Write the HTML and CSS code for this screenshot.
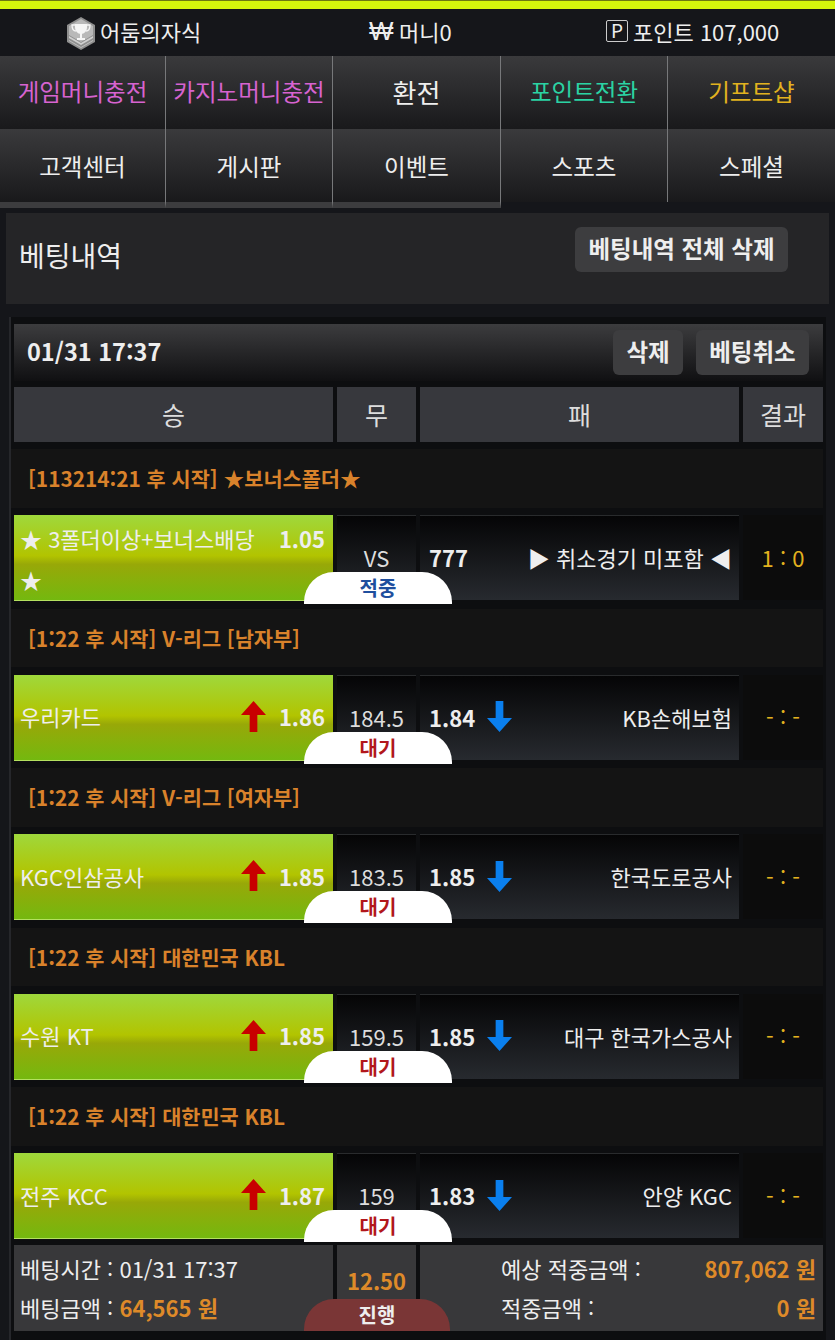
FILE: index.html
```html
<!DOCTYPE html>
<html lang="ko">
<head>
	<meta charset="UTF-8">
	<title>베팅내역</title>
	<link rel="stylesheet" href="styles.css">
</head>
<body>
	<div class="topLine"></div>
	<div class="userBar">
		<div class="userItem">
			<svg class="rankIcon" width="30" height="34" viewBox="0 0 30 34">
				<polygon points="15,0 29,8 29,25 15,33 1,25 1,8" fill="#8f8f8f"/>
				<polygon points="15,2 27,9 27,18 15,25 3,18 3,9" fill="#b9b9b9"/>
				<polygon points="3,19 15,26 27,19 27,21 15,28 3,21" fill="#d0d0d0"/>
				<polygon points="3,23 15,30 27,23 27,24 15,31 3,24" fill="#c0c0c0"/>
				<path d="M9 7h12v3c0 4-2.500 7-6 7s-6-3-6-7z" fill="#f5f5f5"/>
				<path d="M9 8H6c0 4 2 6 4 6M21 8h3c0 4-2 6-4 6" fill="none" stroke="#f5f5f5" stroke-width="1.300"/>
				<path d="M14 16h2v5h3v2h-8v-2h3z" fill="#f5f5f5"/>
			</svg>
			<span>어둠의자식</span>
		</div>
		<div class="userItem">
			<span class="wonSign">₩</span>
			<span>머니0</span>
		</div>
		<div class="userItem">
			<span class="pointBox">P</span>
			<span>포인트 107,000</span>
		</div>
	</div>

	<ul class="nav">
		<li class="pink">게임머니충전</li>
		<li class="pink">카지노머니충전</li>
		<li class="bigText">환전</li>
		<li class="mint">포인트전환</li>
		<li class="gold">기프트샵</li>
	</ul>
	<ul class="nav navSecond">
		<li class="striped">고객센터</li>
		<li class="striped">게시판</li>
		<li class="striped">이벤트</li>
		<li>스포츠</li>
		<li>스페셜</li>
	</ul>

	<div class="pageTitle">
		<h1>베팅내역</h1>
		<button class="btn btnAll">베팅내역 전체 삭제</button>
	</div>

	<div class="betBox">
		<div class="betHead">
			<span class="betDate">01/31 17:37</span>
			<div class="betBtns">
				<button class="btn btnDelete">삭제</button>
				<button class="btn btnCancel">베팅취소</button>
			</div>
		</div>

		<div class="cols colTitles">
			<div>승</div>
			<div>무</div>
			<div>패</div>
			<div>결과</div>
		</div>

		<div class="league">[113214:21 후 시작] ★보너스폴더★</div>
		<div class="cols match">
			<div class="home homeWrap">
				<span class="teamName wrapName">★ 3폴더이상+보너스배당 ★</span>
				<b class="odds oddsTop">1.05</b>
			</div>
			<div class="draw">VS<span class="pill hit">적중</span></div>
			<div class="away">
				<b class="odds">777</b>
				<span class="teamName">▶ 취소경기 미포함 ◀</span>
			</div>
			<div class="score">1 : 0</div>
		</div>

		<div class="league">[1:22 후 시작] V-리그 [남자부]</div>
		<div class="cols match">
			<div class="home">
				<span class="teamName">우리카드</span>
				<svg class="arrow" width="25" height="31" viewBox="0 0 26 31" preserveAspectRatio="none"><polygon points="13,0 26,14 17,14 17,31 9,31 9,14 0,14" fill="#c80000"/></svg>
				<b class="odds">1.86</b>
			</div>
			<div class="draw">184.5<span class="pill">대기</span></div>
			<div class="away">
				<b class="odds">1.84</b>
				<svg class="arrow" width="25" height="31" viewBox="0 0 26 31" preserveAspectRatio="none"><polygon points="13,31 26,17 17,17 17,0 9,0 9,17 0,17" fill="#0a7fee"/></svg>
				<span class="teamName">KB손해보험</span>
			</div>
			<div class="score">- : -</div>
		</div>

		<div class="league">[1:22 후 시작] V-리그 [여자부]</div>
		<div class="cols match">
			<div class="home">
				<span class="teamName">KGC인삼공사</span>
				<svg class="arrow" width="25" height="31" viewBox="0 0 26 31" preserveAspectRatio="none"><polygon points="13,0 26,14 17,14 17,31 9,31 9,14 0,14" fill="#c80000"/></svg>
				<b class="odds">1.85</b>
			</div>
			<div class="draw">183.5<span class="pill">대기</span></div>
			<div class="away">
				<b class="odds">1.85</b>
				<svg class="arrow" width="25" height="31" viewBox="0 0 26 31" preserveAspectRatio="none"><polygon points="13,31 26,17 17,17 17,0 9,0 9,17 0,17" fill="#0a7fee"/></svg>
				<span class="teamName">한국도로공사</span>
			</div>
			<div class="score">- : -</div>
		</div>

		<div class="league">[1:22 후 시작] 대한민국 KBL</div>
		<div class="cols match">
			<div class="home">
				<span class="teamName">수원 KT</span>
				<svg class="arrow" width="25" height="31" viewBox="0 0 26 31" preserveAspectRatio="none"><polygon points="13,0 26,14 17,14 17,31 9,31 9,14 0,14" fill="#c80000"/></svg>
				<b class="odds">1.85</b>
			</div>
			<div class="draw">159.5<span class="pill">대기</span></div>
			<div class="away">
				<b class="odds">1.85</b>
				<svg class="arrow" width="25" height="31" viewBox="0 0 26 31" preserveAspectRatio="none"><polygon points="13,31 26,17 17,17 17,0 9,0 9,17 0,17" fill="#0a7fee"/></svg>
				<span class="teamName">대구 한국가스공사</span>
			</div>
			<div class="score">- : -</div>
		</div>

		<div class="league">[1:22 후 시작] 대한민국 KBL</div>
		<div class="cols match">
			<div class="home">
				<span class="teamName">전주 KCC</span>
				<svg class="arrow" width="25" height="31" viewBox="0 0 26 31" preserveAspectRatio="none"><polygon points="13,0 26,14 17,14 17,31 9,31 9,14 0,14" fill="#c80000"/></svg>
				<b class="odds">1.87</b>
			</div>
			<div class="draw">159<span class="pill">대기</span></div>
			<div class="away">
				<b class="odds">1.83</b>
				<svg class="arrow" width="25" height="31" viewBox="0 0 26 31" preserveAspectRatio="none"><polygon points="13,31 26,17 17,17 17,0 9,0 9,17 0,17" fill="#0a7fee"/></svg>
				<span class="teamName">안양 KGC</span>
			</div>
			<div class="score">- : -</div>
		</div>

		<div class="cols summary">
			<div class="sumLeft">
				<p>베팅시간 : 01/31 17:37</p>
				<p>베팅금액 : <b class="orange">64,565 원</b></p>
			</div>
			<div class="sumRate">
				<b class="orange">12.50</b>
				<span class="pill going">진행</span>
			</div>
			<div class="sumRight">
				<p><span>예상 적중금액 :</span><b class="orange">807,062 원</b></p>
				<p><span>적중금액 :</span><b class="orange">0 원</b></p>
			</div>
		</div>
	</div>
</body>
</html>
```

FILE: styles.css
```css
*{
	margin: 0;
	padding: 0;
	box-sizing: border-box;
}
ul{
	list-style: none;
}
body{
	width: 835px;
	height: 1340px;
	overflow: hidden;
	background-color: #15161a;
	color: #eee;
	font-family: "Noto Sans CJK KR", "Noto Sans", sans-serif;
	font-size: 22px;
}
.topLine{
	height: 9px;
	background-color: #d4f50c;
	border-top: 1px solid #6d7a10;
}
.userBar{
	display: grid;
	grid-template-columns: 303px 237px 1fr;
	align-items: center;
	height: 47px;
	padding: 0 0 3px 66px;
}
.userItem{
	display: flex;
	align-items: center;
	line-height: 1;
}
.rankIcon{
	margin: 6px 4px 0 0;
}
.wonSign{
	width: 24px;
	margin-right: 6px;
	font-size: 26px;
	font-family: "Liberation Sans", sans-serif;
}
.pointBox{
	width: 22px;
	height: 22px;
	margin-right: 5px;
	border: 1px solid #ccc;
	border-radius: 2px;
	font-size: 19px;
	line-height: 18px;
	text-align: center;
}

/* 메뉴 */
.nav{
	display: grid;
	grid-template-columns: 166px 167px 168px 167px 167px;
	height: 73px;
}
.nav>li{
	display: flex;
	align-items: center;
	justify-content: center;
	padding-bottom: 3px;
	font-size: 23.500px;
	background: linear-gradient(#3a3a3c, #19191b);
	border-right: 1px solid #77787a;
}
.nav>li:last-child{
	border-right: 0;
}
.nav>li.bigText{
	font-size: 26px;
}
.navSecond{
	height: 79px;
}
.navSecond>li{
	height: 73px;
	padding-bottom: 0;
}
.navSecond>li.striped{
	height: 79px;
	border-bottom: 6px solid #3c3c3e;
	background-clip: padding-box;
}
.pink{
	color: #d763d0;
}
.mint{
	color: #2bd3a3;
}
.gold{
	color: #e2b21f;
}

.pageTitle{
	display: flex;
	align-items: flex-start;
	justify-content: space-between;
	height: 91px;
	margin: 5px 6px 13px;
	padding: 14px 41px 0 13px;
	background-color: #252527;
}
.pageTitle h1{
	font-size: 28px;
	font-weight: 400;
	line-height: 56px;
}
.btn{
	height: 45px;
	padding: 0 0 3px;
	border: 0;
	border-radius: 6px;
	background-color: #3d3d3f;
	color: #eee;
	font-family: inherit;
	font-size: 23.500px;
	font-weight: 700;
}
.btnAll{
	width: 213px;
}
.btnDelete{
	width: 70px;
}
.btnCancel{
	width: 113px;
}

.betBox{
	height: 1023px;
	margin: 0 9px;
	padding: 7px 3px 0 3px;
	border-left: 2px solid #26272b;
	background-color: #0d0e10;
}
.betHead{
	display: flex;
	align-items: center;
	justify-content: space-between;
	height: 57px;
	padding: 0 14px 0 13px;
	background: linear-gradient(#3c3c3e, #101012);
}
.betDate{
	padding-bottom: 3px;
	font-size: 23.500px;
	font-weight: 700;
}
.betBtns{
	display: flex;
	gap: 13px;
}
.cols{
	display: grid;
	grid-template-columns: 319px 79px 319px 80px;
	column-gap: 4px;
	width: 809px;
}
.colTitles{
	height: 54.500px;
	margin-top: 6px;
}
.colTitles>div{
	background-color: #37383d;
	font-size: 25px;
	line-height: 55px;
	text-align: center;
	color: #ddd;
}
.league{
	height: 58.500px;
	margin: 7.500px 0 7.500px -3px;
	padding-left: 17px;
	background-color: #141414;
	color: #d9822b;
	font-size: 20.800px;
	font-weight: 700;
	line-height: 58px;
}
.match{
	height: 86px;
	align-items: start;
}
.match>div{
	display: flex;
	align-items: center;
	height: 85px;
	padding-bottom: 2px;
}
.match>.home{
	height: 86px;
	padding: 0 8px 2px 6px;
	background: linear-gradient(#9fd83c, #b2c400 48%, #98a808 58%, #74b80f);
	border-bottom: 1px solid #b4e060;
}
.match>.homeWrap{
	align-items: flex-start;
	justify-content: space-between;
	padding-top: 3px;
}
.teamName{
	flex: 1;
	font-size: 22px;
	line-height: 1;
}
.wrapName{
	flex: none;
	width: 250px;
	line-height: 41px;
}
.arrow{
	margin-right: 13px;
}
.odds{
	font-size: 22px;
	line-height: 1;
}
.oddsTop{
	line-height: 41px;
}
.draw{
	position: relative;
	justify-content: center;
	font-size: 22px;
	color: #ddd;
	background: linear-gradient(#050506, #272a2f);
	border-top: 1px solid #292b2d;
}
.match>.away{
	padding: 0 7px 2px 9px;
	background: linear-gradient(#050506, #272a2f);
	border-top: 1px solid #292b2d;
}
.away .arrow{
	margin: 0 0 0 12px;
}
.away .teamName{
	text-align: right;
}
.score{
	justify-content: center;
	background-color: #0c0c0c;
	color: #e2b21f;
	font-size: 22px;
}
.pill{
	position: absolute;
	left: -33px;
	bottom: -4px;
	width: 148px;
	height: 32px;
	border-radius: 30px 30px 0 0;
	background-color: #fff;
	color: #b2171c;
	font-size: 20px;
	font-weight: 700;
	line-height: 32px;
	text-align: center;
}
.hit{
	color: #1f4f9e;
}
.summary{
	height: 86px;
	margin-top: 6px;
}
.summary>div{
	background-color: #38383a;
}
.sumLeft{
	padding-left: 6px;
}
.summary p{
	height: 39px;
	font-size: 22px;
	line-height: 39px;
}
.sumLeft p:first-child,
.sumRight p:first-child{
	margin-top: 4px;
}
.summary p .orange{
	font-size: 22px;
}
.orange{
	color: #de8a29;
}
.sumRate{
	position: relative;
	padding-top: 19px;
	text-align: center;
	font-size: 22px;
	line-height: 32px;
}
.going{
	left: -33px;
	bottom: 0;
	width: 146px;
	background-color: #7a3636;
	color: #eee;
}
.sumRight{
	grid-column: 3 / 5;
	padding: 0 7px 0 81px;
}
.sumRight p{
	display: flex;
	justify-content: space-between;
}
```
